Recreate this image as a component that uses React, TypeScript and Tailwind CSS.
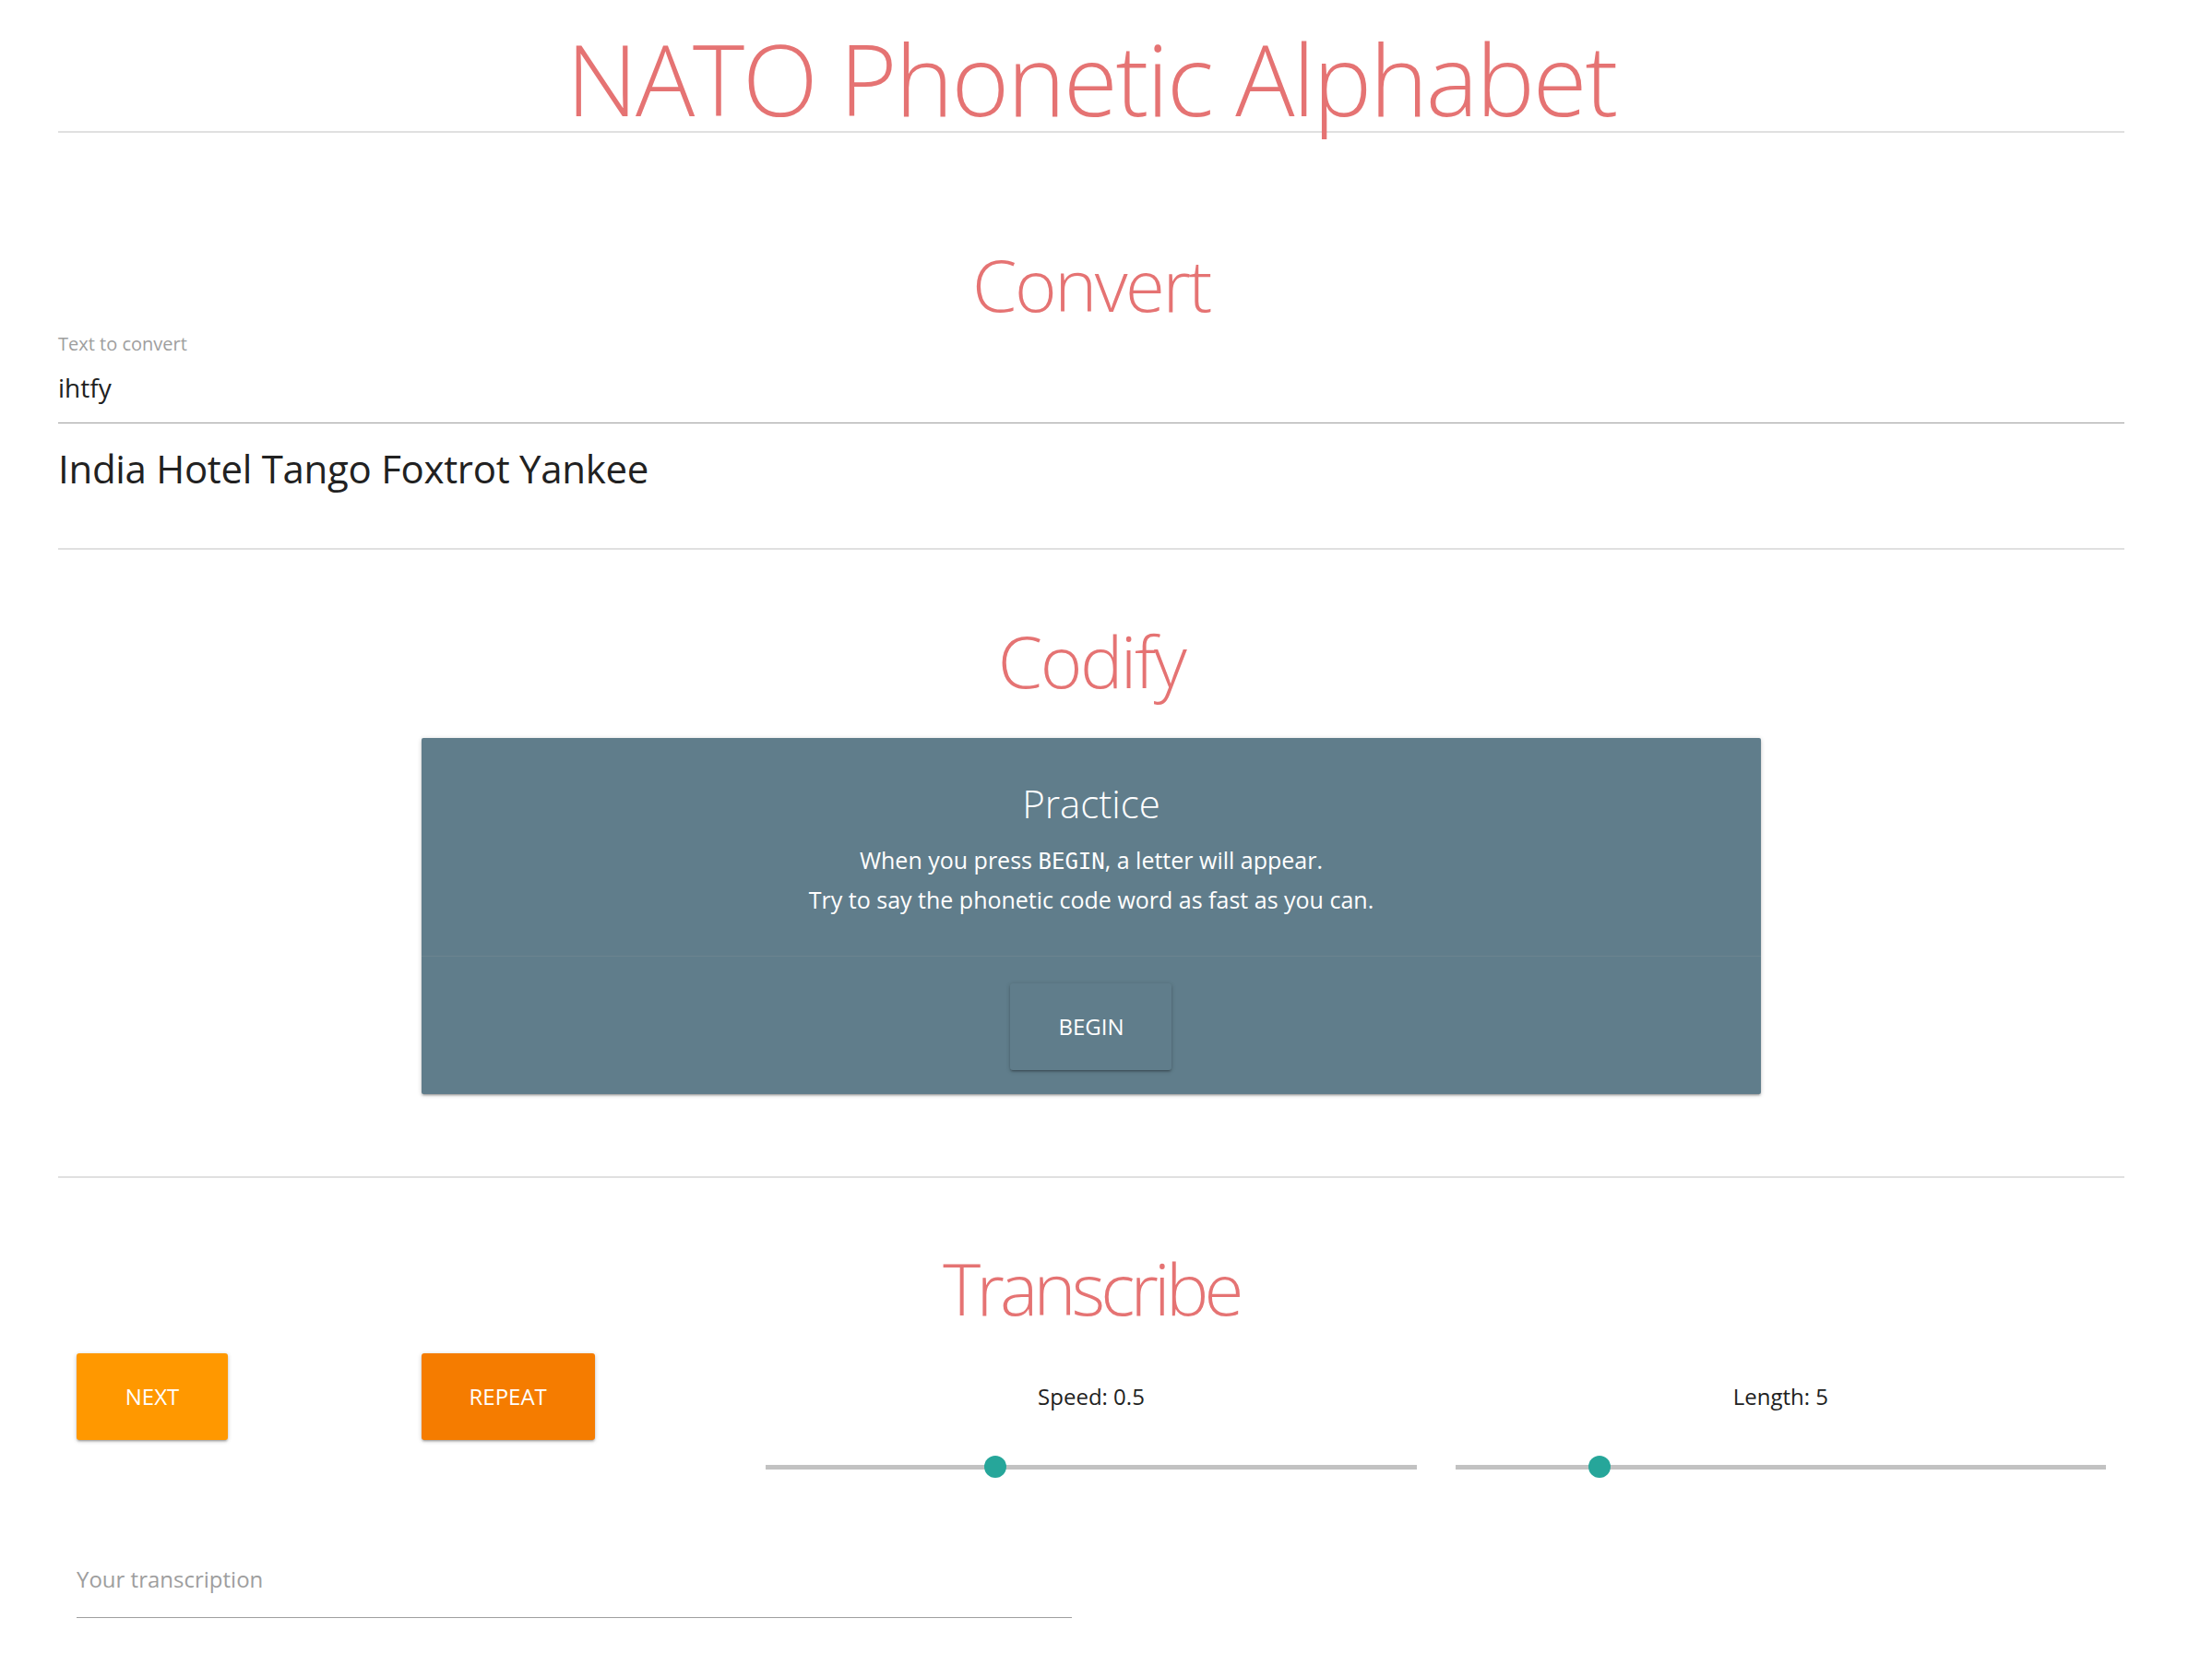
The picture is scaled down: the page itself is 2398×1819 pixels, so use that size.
import React from "react";

const font = { fontFamily: '"Open Sans", "Noto Sans", sans-serif' };

function Slider({ label, thumbLeft }: { label: string; thumbLeft: string }) {
  return (
    <div className="col-span-4 px-[21px] pt-[29px]">
      <div className="text-center text-[24px] leading-[36px] text-[#212121]">{label}</div>
      <div className="relative mt-[46px] h-[24px]">
        <div className="absolute left-0 right-0 top-[10px] h-[5px] bg-[#c2c2c2]" />
        <div className={`absolute top-0 h-[24px] w-[24px] rounded-full bg-[#26a69a] ${thumbLeft}`} />
      </div>
    </div>
  );
}

export default function App() {
  return (
    <div className="min-h-[1819px] bg-white" style={font}>
      <div className="ml-[63px] w-[2240px]">
        <h1 className="h-[142px] text-center text-[107px] font-light leading-[170px] tracking-[-2.2px] text-[#e57373]">
          NATO Phonetic Alphabet
        </h1>
        <div className="h-[2px] bg-[#e0e0e0]" />

        <h2 className="mt-[114px] text-center text-[78px] font-light leading-[100px] tracking-[-2.5px] text-[#e57373]">Convert</h2>
        <label className="block text-[20px] leading-[30px] text-[#9e9e9e]">Text to convert</label>
        <input
          readOnly
          value="ihtfy"
          className="block h-[71px] w-full border-b border-[#9e9e9e] pb-[6px] text-[28px] text-[#212121] outline-none"
        />
        <div className="mt-[19px] text-[42px] leading-[60px] tracking-[-0.3px] text-[#212121]">India Hotel Tango Foxtrot Yankee</div>
        <div className="mt-[56px] h-[2px] bg-[#e0e0e0]" />

        <h2 className="mt-[70px] text-center text-[78px] font-light leading-[100px] tracking-[-2.5px] text-[#e57373]">Codify</h2>
        <div className="-ml-[1px] mt-[34px] grid w-[2242px] grid-cols-12">
          <div className="col-span-8 col-start-3 px-[21px]">
            <div className="rounded-[2px] bg-[#607d8b] text-white shadow-[0_2px_2px_0_rgba(0,0,0,0.14),0_3px_1px_-2px_rgba(0,0,0,0.12),0_1px_5px_0_rgba(0,0,0,0.2)]">
              <div className="px-[40px] pb-[40px] pt-[43px] text-center">
                <div className="text-[42px] font-light leading-[56px]">Practice</div>
                <div className="mt-[13px] text-[25px] leading-[41px]">
                  <p>
                    When you press{" "}
                    <code className="text-[24px]" style={{ fontFamily: '"DejaVu Sans Mono", monospace' }}>
                      BEGIN
                    </code>
                    , a letter will appear.
                  </p>
                  <p>Try to say the phonetic code word as fast as you can.</p>
                </div>
              </div>
              <div className="flex justify-center border-t border-[rgba(160,160,160,0.2)] pb-[26px] pt-[29px]">
                <button className="h-[94px] w-[175px] rounded-[3px] bg-[#607d8b] text-[24px] uppercase text-white shadow-[0_2px_2px_0_rgba(0,0,0,0.14),0_3px_1px_-2px_rgba(0,0,0,0.12),0_1px_5px_0_rgba(0,0,0,0.2)]">
                  Begin
                </button>
              </div>
            </div>
          </div>
        </div>
        <div className="mt-[89px] h-[2px] bg-[#e0e0e0]" />

        <h2 className="mt-[69px] text-center text-[78px] font-light leading-[100px] tracking-[-4.8px] text-[#e57373]">Transcribe</h2>
        <div className="-ml-[1px] mt-[21px] grid w-[2242px] grid-cols-12">
          <div className="col-span-2 px-[21px]">
            <button className="h-[94px] w-[164px] rounded-[3px] bg-[#ff9800] text-[24px] uppercase text-white shadow-[0_2px_2px_0_rgba(0,0,0,0.14),0_3px_1px_-2px_rgba(0,0,0,0.12),0_1px_5px_0_rgba(0,0,0,0.2)]">
              Next
            </button>
          </div>
          <div className="col-span-2 px-[21px]">
            <button className="h-[94px] w-[188px] rounded-[3px] bg-[#f57c00] text-[24px] uppercase text-white shadow-[0_2px_2px_0_rgba(0,0,0,0.14),0_3px_1px_-2px_rgba(0,0,0,0.12),0_1px_5px_0_rgba(0,0,0,0.2)]">
              Repeat
            </button>
          </div>
          <Slider label="Speed: 0.5" thumbLeft="left-[237px]" />
          <Slider label="Length: 5" thumbLeft="left-[144px]" />
        </div>
        <div className="-ml-[1px] mt-[91px] grid w-[2242px] grid-cols-12">
          <div className="col-span-6 px-[21px]">
            <input
              placeholder="Your transcription"
              className="block h-[61px] w-full border-b border-[#9e9e9e] pb-[24px] text-[24px] text-[#212121] outline-none placeholder:text-[#9e9e9e]"
            />
          </div>
        </div>
      </div>
    </div>
  );
}
